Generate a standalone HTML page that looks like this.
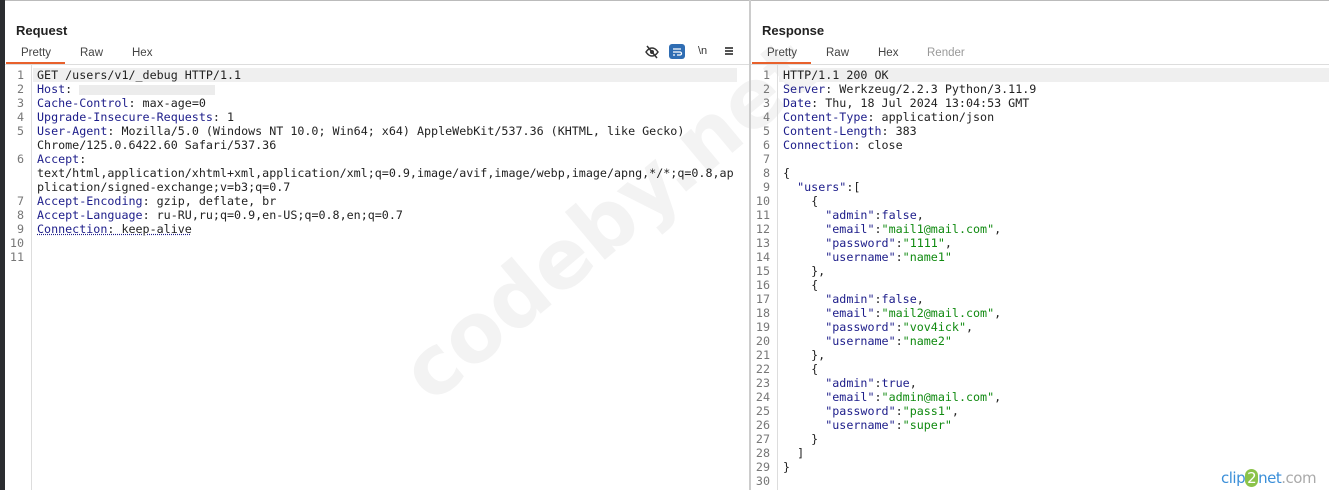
<!DOCTYPE html>
<html><head><meta charset="utf-8"><style>
*{margin:0;padding:0;box-sizing:border-box}
body{width:1329px;height:490px;background:#fff;position:relative;overflow:hidden;font-family:"Liberation Sans","DejaVu Sans",sans-serif}
.abs{position:absolute}
.title{font-weight:bold;font-size:13px;color:#222;top:23px}
.tab{font-size:11.5px;color:#444;top:47px}
.code{font-family:"DejaVu Sans Mono","Liberation Mono",monospace;font-size:11.7px;line-height:14px;white-space:pre;color:#222}
.num{font-family:"DejaVu Sans Mono",monospace;font-size:11.7px;line-height:14px;color:#777;text-align:right;white-space:pre}
.k{color:#1d1d8a}
.s{color:#108a10}
</style></head><body>
<div class="abs" style="left:0;top:0;width:1329px;height:1px;background:#bbb"></div>
<div class="abs" style="left:0;top:0;width:5px;height:490px;background:#2b2d30"></div>
<!-- watermark -->
<div class="abs" style="left:440px;top:335px;height:80px;line-height:80px;font-size:82px;font-weight:bold;color:#f3f3f3;transform-origin:0 100%;transform:rotate(-40deg);white-space:nowrap;font-family:'DejaVu Sans',sans-serif">codeby.net</div>

<!-- left panel -->
<div class="abs title" style="left:16px">Request</div>
<div class="abs tab" style="left:21px">Pretty</div>
<div class="abs tab" style="left:80px">Raw</div>
<div class="abs tab" style="left:132px">Hex</div>
<div class="abs" style="left:6px;top:62px;width:59px;height:2px;background:#e8612c"></div>
<div class="abs" style="left:5px;top:64px;width:744px;height:1px;background:#ddd"></div>
<svg class="abs" style="left:644px;top:44px" width="16" height="16" viewBox="0 0 16 16"><path d="M2 8c2-3 4-4 6-4s4 1 6 4c-2 3-4 4-6 4s-4-1-6-4z" fill="none" stroke="#333" stroke-width="1.5"/><circle cx="8" cy="8" r="2" fill="#333"/><path d="M3 2l10 12" stroke="#333" stroke-width="1.5"/></svg>
<div class="abs" style="left:669px;top:44px;width:16px;height:15px;background:#2f6db3;border-radius:3px"></div>
<svg class="abs" style="left:669px;top:44px" width="16" height="15"><path d="M4 5h8M4 8h7a1.5 1.5 0 010 3H8M4 11h2" stroke="#fff" stroke-width="1.3" fill="none"/></svg>
<div class="abs" style="left:698px;top:45px;font-size:11px;color:#333">\n</div>
<div class="abs" style="left:725px;top:47px;width:8px;height:8px;border-top:2px solid #555;border-bottom:2px solid #555"></div>
<div class="abs" style="left:725px;top:50px;width:8px;height:2px;background:#555"></div>

<div class="abs" style="left:33px;top:68px;width:704px;height:14px;background:#efefef;z-index:-1"></div>
<div class="abs" style="left:31px;top:65px;width:1px;height:425px;background:#ddd"></div>
<div class="abs num" style="left:5px;top:68px;width:19px">1
2
3
4
5

6


7
8
9
10
11</div>
<div class="abs code" style="left:37px;top:68px">GET /users/v1/_debug HTTP/1.1
<span class="k">Host</span>: <span style="display:inline-block;width:136px;height:10px;background:#ececec;vertical-align:middle"></span>
<span class="k">Cache-Control</span>: max-age=0
<span class="k">Upgrade-Insecure-Requests</span>: 1
<span class="k">User-Agent</span>: Mozilla/5.0 (Windows NT 10.0; Win64; x64) AppleWebKit/537.36 (KHTML, like Gecko)
Chrome/125.0.6422.60 Safari/537.36
<span class="k">Accept</span>:
text/html,application/xhtml+xml,application/xml;q=0.9,image/avif,image/webp,image/apng,*/*;q=0.8,ap
plication/signed-exchange;v=b3;q=0.7
<span class="k">Accept-Encoding</span>: gzip, deflate, br
<span class="k">Accept-Language</span>: ru-RU,ru;q=0.9,en-US;q=0.8,en;q=0.7
<span style="text-decoration:underline dotted #1d1d8a"><span class="k">Connection</span>: keep-alive</span></div>

<div class="abs" style="left:749px;top:0;width:2px;height:490px;background:#ccc"></div>

<!-- right panel -->
<div class="abs title" style="left:762px">Response</div>
<div class="abs tab" style="left:767px">Pretty</div>
<div class="abs tab" style="left:826px">Raw</div>
<div class="abs tab" style="left:878px">Hex</div>
<div class="abs tab" style="left:927px;color:#999">Render</div>
<div class="abs" style="left:752px;top:62px;width:59px;height:2px;background:#e8612c"></div>
<div class="abs" style="left:751px;top:64px;width:578px;height:1px;background:#ddd"></div>
<div class="abs" style="left:779px;top:68px;width:550px;height:14px;background:#efefef;z-index:-1"></div>
<div class="abs" style="left:777px;top:65px;width:1px;height:425px;background:#ddd"></div>
<div class="abs num" style="left:751px;top:68px;width:19px">1
2
3
4
5
6
7
8
9
10
11
12
13
14
15
16
17
18
19
20
21
22
23
24
25
26
27
28
29
30</div>
<div class="abs code" style="left:783px;top:68px">HTTP/1.1 200 OK
<span class="k">Server</span>: Werkzeug/2.2.3 Python/3.11.9
<span class="k">Date</span>: Thu, 18 Jul 2024 13:04:53 GMT
<span class="k">Content-Type</span>: application/json
<span class="k">Content-Length</span>: 383
<span class="k">Connection</span>: close

{
  <span class="k">"users"</span>:[
    {
      <span class="k">"admin"</span>:<span class="k">false</span>,
      <span class="k">"email"</span>:<span class="s">"mail1@mail.com"</span>,
      <span class="k">"password"</span>:<span class="s">"1111"</span>,
      <span class="k">"username"</span>:<span class="s">"name1"</span>
    },
    {
      <span class="k">"admin"</span>:<span class="k">false</span>,
      <span class="k">"email"</span>:<span class="s">"mail2@mail.com"</span>,
      <span class="k">"password"</span>:<span class="s">"vov4ick"</span>,
      <span class="k">"username"</span>:<span class="s">"name2"</span>
    },
    {
      <span class="k">"admin"</span>:<span class="k">true</span>,
      <span class="k">"email"</span>:<span class="s">"admin@mail.com"</span>,
      <span class="k">"password"</span>:<span class="s">"pass1"</span>,
      <span class="k">"username"</span>:<span class="s">"super"</span>
    }
  ]
}</div>
<div class="abs" style="left:1221px;top:469px;font-size:15px;font-family:'DejaVu Sans',sans-serif;letter-spacing:-0.5px"><span style="color:#3b8fd9">clip</span><span style="color:#fff;background:#8bc34a;border-radius:8px;padding:0 2px">2</span><span style="color:#3b8fd9">net</span><span style="color:#aaa">.com</span></div>
</body></html>
